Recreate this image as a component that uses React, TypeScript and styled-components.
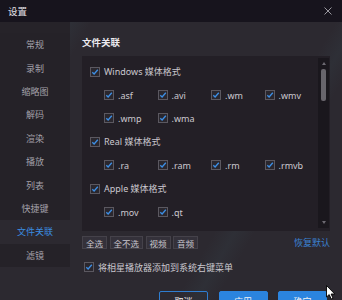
import styled, { createGlobalStyle } from "styled-components";

const GlobalStyle = createGlobalStyle`
  html, body {
    margin: 0;
    padding: 0;
    background: #1c1a1f;
  }
  * {
    box-sizing: border-box;
  }
`;

const FONT = `"Noto Sans", "Noto Sans CJK SC", sans-serif`;

const menuItems = ["常规", "录制", "缩略图", "解码", "渲染", "播放", "列表", "快捷键", "文件关联", "滤镜"];

interface FormatGroup {
  title: string;
  items: string[];
}

const groups: FormatGroup[] = [
  { title: "Windows 媒体格式", items: [".asf", ".avi", ".wm", ".wmv", ".wmp", ".wma"] },
  { title: "Real 媒体格式", items: [".ra", ".ram", ".rm", ".rmvb"] },
  { title: "Apple 媒体格式", items: [".mov", ".qt"] },
];

const CheckBox = () => (
  <StyledCheck>
    <svg width="8" height="8" viewBox="0 0 8 8">
      <path d="M1.3 4.2 L3.1 6 L6.8 1.8" fill="none" stroke="#3d8fe6" strokeWidth="1.3" />
    </svg>
  </StyledCheck>
);

const App = () => {
  return (
    <Window>
      <GlobalStyle />
      <TitleBar>
        <span>设置</span>
        <CloseIcon width="8" height="8" viewBox="0 0 8 8">
          <path d="M0.5 0.5 L7.5 7.5 M7.5 0.5 L0.5 7.5" stroke="#9b99a0" strokeWidth="1" />
        </CloseIcon>
      </TitleBar>
      <Body>
        <Sidebar>
          {menuItems.map((item) => (
            <MenuItem key={item} $active={item === "文件关联"}>
              {item}
            </MenuItem>
          ))}
        </Sidebar>
        <Main>
          <Heading>文件关联</Heading>
          <ListBox>
            <ListContent>
              {groups.map((group) => (
                <div key={group.title}>
                  <GroupRow>
                    <CheckBox />
                    <span>{group.title}</span>
                  </GroupRow>
                  <ItemGrid>
                    {group.items.map((ext) => (
                      <ItemCell key={ext}>
                        <CheckBox />
                        <span>{ext}</span>
                      </ItemCell>
                    ))}
                  </ItemGrid>
                </div>
              ))}
            </ListContent>
            <ScrollBar>
              <ArrowUp />
              <Thumb />
              <ArrowDown />
            </ScrollBar>
          </ListBox>
          <Toolbar>
            <SmallButton>全选</SmallButton>
            <SmallButton>全不选</SmallButton>
            <SmallButton>视频</SmallButton>
            <SmallButton>音频</SmallButton>
            <ResetLink>恢复默认</ResetLink>
          </Toolbar>
          <ContextRow>
            <CheckBox />
            <span>将相星播放器添加到系统右键菜单</span>
          </ContextRow>
          <Footer>
            <ActionButton $primary={false}>取消</ActionButton>
            <ActionButton $primary>应用</ActionButton>
            <ActionButton $primary>确定</ActionButton>
          </Footer>
        </Main>
      </Body>
      <Cursor width="10" height="15" viewBox="0 0 10 15">
        <path d="M0.5 0.5 L0.5 12 L3.2 9.6 L5.2 14 L7 13.2 L5.1 9 L8.8 9 Z" fill="#ffffff" stroke="#000000" strokeWidth="0.9" />
      </Cursor>
    </Window>
  );
};

const Window = styled.div`
  position: relative;
  width: 342px;
  height: 300px;
  overflow: hidden;
  display: flex;
  flex-direction: column;
  font-family: ${FONT};
  background: #2c2930;
`;

const TitleBar = styled.div`
  height: 22px;
  flex-shrink: 0;
  display: flex;
  align-items: center;
  justify-content: space-between;
  padding: 0 10px 0 8px;
  background: #17141d;
  color: #e2e0e6;
  font-size: 9.5px;
`;

const CloseIcon = styled.svg`
  display: block;
`;

const Body = styled.div`
  flex: 1;
  display: flex;
  background:
    linear-gradient(120deg, transparent 8%, rgba(70, 120, 130, 0.12) 12%, transparent 18%),
    linear-gradient(120deg, transparent 66%, rgba(70, 120, 130, 0.08) 70%, transparent 74%),
    #2c2930;
`;

const Sidebar = styled.div`
  width: 70px;
  flex-shrink: 0;
  padding-top: 11px;
  display: flex;
  flex-direction: column;
  background: linear-gradient(#262329, #262329) top / 100% 11px no-repeat;
`;

const MenuItem = styled.div<{ $active: boolean }>`
  height: 23.4px;
  display: flex;
  align-items: center;
  justify-content: center;
  font-size: 9px;
  color: ${({ $active }) => ($active ? "#3b8de0" : "#a3a0a8")};
  background: ${({ $active }) => ($active ? "transparent" : "#252228")};
`;

const Main = styled.div`
  flex: 1;
  display: flex;
  flex-direction: column;
  padding: 14px 14px 0 12px;
`;

const Heading = styled.div`
  height: 14px;
  line-height: 14px;
  font-size: 9.5px;
  font-weight: bold;
  color: #ebe9ef;
  margin-bottom: 6px;
`;

const ListBox = styled.div`
  height: 175px;
  display: flex;
  background: #231f26;
`;

const ListContent = styled.div`
  flex: 1;
  padding-top: 4px;
  overflow: hidden;
`;

const rowText = `
  font-size: 9px;
  color: #cbc8cf;
  display: flex;
  align-items: center;
  gap: 4px;
`;

const GroupRow = styled.div`
  ${rowText}
  height: 23.4px;
  padding-left: 8px;
`;

const ItemGrid = styled.div`
  display: grid;
  grid-template-columns: repeat(4, 53.5px);
  padding-left: 22px;
`;

const ItemCell = styled.div`
  ${rowText}
  height: 23.4px;
`;

const StyledCheck = styled.span`
  width: 10px;
  height: 10px;
  flex-shrink: 0;
  border: 1px solid #5b5860;
  background: #2a272e;
  display: flex;
  align-items: center;
  justify-content: center;
`;

const ScrollBar = styled.div`
  width: 11px;
  margin: 2px 1px 3px 0;
  background: #1a171d;
  display: flex;
  flex-direction: column;
  align-items: center;
  padding-top: 4px;
`;

const ArrowUp = styled.div`
  width: 0;
  height: 0;
  border-left: 2.5px solid transparent;
  border-right: 2.5px solid transparent;
  border-bottom: 3px solid #6d6a72;
`;

const Thumb = styled.div`
  width: 5px;
  height: 32px;
  margin-top: 4px;
  border-radius: 2px;
  background: #68656c;
`;

const ArrowDown = styled.div`
  margin-top: auto;
  margin-bottom: 4px;
  width: 0;
  height: 0;
  border-left: 2.5px solid transparent;
  border-right: 2.5px solid transparent;
  border-top: 3px solid #6d6a72;
`;

const Toolbar = styled.div`
  margin-top: 5px;
  height: 13px;
  display: flex;
  align-items: center;
  gap: 2.5px;
`;

const SmallButton = styled.div`
  height: 13px;
  padding: 0 3px;
  display: flex;
  align-items: center;
  font-size: 8.5px;
  color: #c9c6cd;
  background: #34313a;
  border: 1px solid #45424a;
`;

const ResetLink = styled.div`
  margin-left: auto;
  font-size: 9px;
  color: #3b82d2;
`;

const ContextRow = styled.div`
  ${rowText}
  margin-top: 11px;
  height: 14px;
  padding-left: 2px;
`;

const Footer = styled.div`
  margin-top: 17px;
  display: flex;
  justify-content: flex-end;
  gap: 10.5px;
  padding-right: 3px;
`;

const ActionButton = styled.div<{ $primary: boolean }>`
  width: 49px;
  height: 20px;
  display: flex;
  align-items: center;
  justify-content: center;
  font-size: 9px;
  color: #f2f2f4;
  background: ${({ $primary }) => ($primary ? "#2b84df" : "transparent")};
  border: 1px solid ${({ $primary }) => ($primary ? "#2b84df" : "#2e7dd0")};
  border-radius: 2px;
`;

const Cursor = styled.svg`
  position: absolute;
  left: 326px;
  top: 285px;
`;

export default App;
